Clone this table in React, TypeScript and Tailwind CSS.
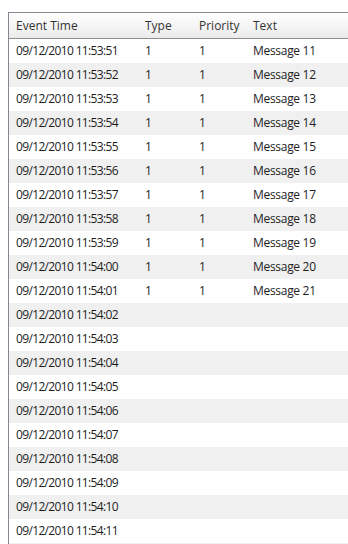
const rows = Array.from({ length: 22 }, (_, i) => {
  const sec = 51 + i;
  const m = sec >= 60 ? 54 : 53;
  const s = sec >= 60 ? sec - 60 : sec;
  const time = i < 21 ? `09/12/2010 11:${m}:${String(s).padStart(2, '0')}` : '';
  const filled = i < 11;
  return { time, type: filled ? '1' : '', priority: filled ? '1' : '', text: filled ? `Message ${11 + i}` : '' };
});

export default function App() {
  return (
    <div className="w-[348px] h-[544px] overflow-hidden bg-white pt-[12px] pl-[8px]" style={{ fontFamily: '"Open Sans", "Noto Sans", sans-serif' }}>
      <div className="w-[360px] border-l border-t border-[#828790] text-[12px] text-[#1e1e1e]">
        <div className="flex h-[26px] items-center border-b border-[#8e8f8f] bg-gradient-to-b from-[#ffffff] to-[#ebebeb] text-[#333]">
          <div className="w-[129px] pl-[7px]">Event Time</div>
          <div className="w-[54px] pl-[7px]">Type</div>
          <div className="w-[54px] pl-[7px]">Priority</div>
          <div className="flex-1 pl-[7px]">Text</div>
        </div>
        {rows.map((r, i) => (
          <div key={i} className={`flex h-[24px] items-center ${i % 2 === 1 ? 'bg-[#f0f0f0]' : 'bg-white'}`}>
            <div className="w-[129px] pl-[7px] whitespace-nowrap tracking-[-0.65px]">{r.time}</div>
            <div className="w-[54px] pl-[7px]">{r.type}</div>
            <div className="w-[54px] pl-[7px]">{r.priority}</div>
            <div className="flex-1 pl-[7px] tracking-[-0.3px]">{r.text}</div>
          </div>
        ))}
      </div>
    </div>
  );
}
